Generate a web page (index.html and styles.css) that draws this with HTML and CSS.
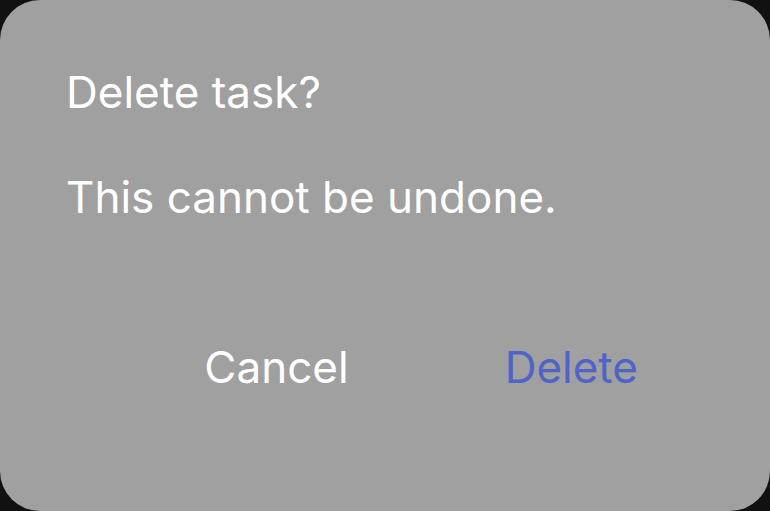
FILE: index.html
```html
<!DOCTYPE html>
<html>
<head>
<meta charset="utf-8">
<link rel="stylesheet" href="styles.css">
</head>
<body>
<div class="dialog">
  <div class="title">Delete task?</div>
  <div class="message">This cannot be undone.</div>
  <div class="actions">
    <button class="btn btn-cancel">Cancel</button>
    <button class="btn btn-delete">Delete</button>
  </div>
</div>
</body>
</html>
```

FILE: styles.css
```css
html, body {
  margin: 0;
  padding: 0;
  background: #111111;
}
.dialog {
  width: 770px;
  height: 511px;
  box-sizing: border-box;
  background: #a0a0a0;
  border-radius: 40px;
  padding: 65px 66px 0 66px;
  font-family: Inter, "Noto Sans", sans-serif;
  color: #ffffff;
  display: flex;
  flex-direction: column;
}
.title {
  font-size: 44px;
  line-height: 54px;
}
.message {
  font-size: 44px;
  line-height: 54px;
  margin-top: 51px;
}
.actions {
  display: flex;
  justify-content: flex-end;
  gap: 156px;
  margin-top: 116px;
  padding-right: 66px;
}
.btn {
  background: none;
  border: none;
  padding: 0;
  font-family: inherit;
  font-size: 44px;
  line-height: 54px;
  color: #ffffff;
}
.btn-delete {
  color: #4f63c9;
}
```
